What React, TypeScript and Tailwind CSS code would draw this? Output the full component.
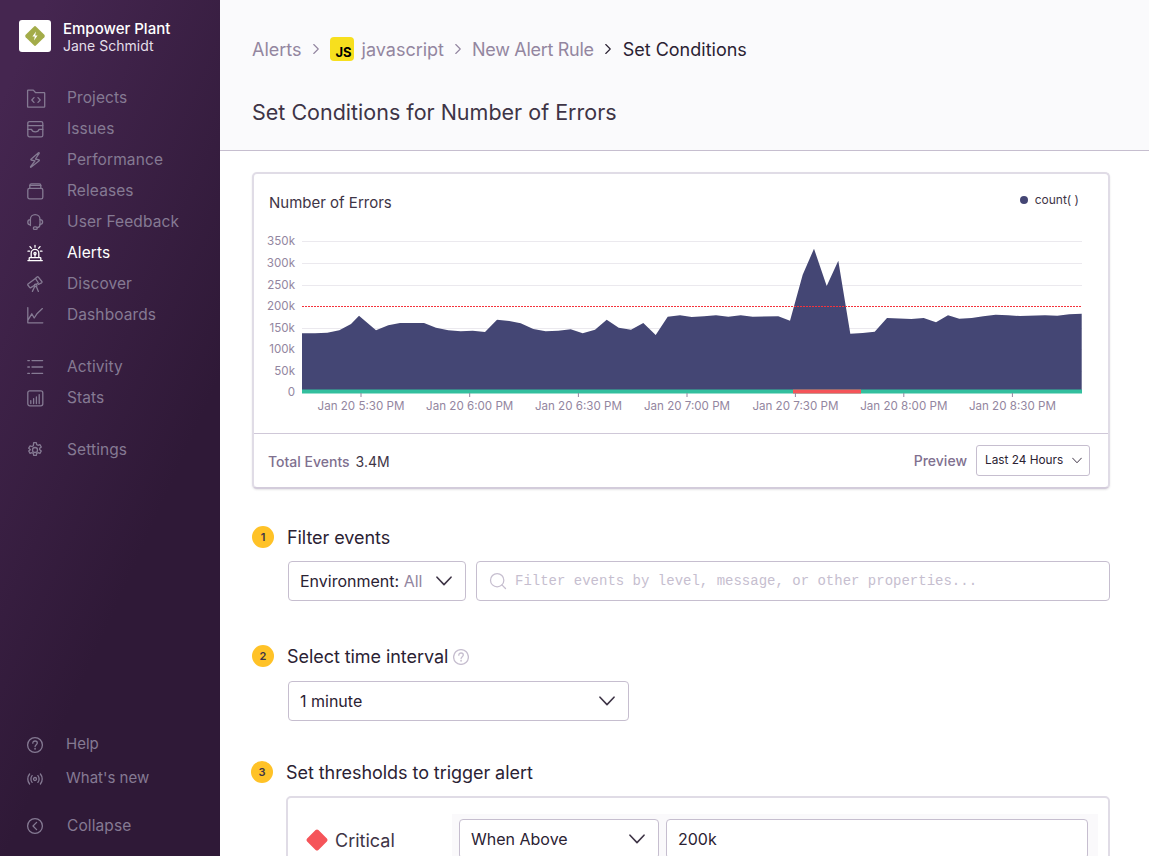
import React from "react";
import { ChevronRight, Search } from "lucide-react";

const stroke = { fill: "none", stroke: "currentColor", strokeWidth: 1.3, strokeLinecap: "round", strokeLinejoin: "round" } as const;

function Icon({ children }: { children: React.ReactNode }) {
    return (
        <svg viewBox="0 0 16 16" className="w-4 h-4 shrink-0 overflow-visible" {...stroke}>
            {children}
        </svg>
    );
}

function Chevron({ className }: { className: string }) {
    return (
        <svg viewBox="0 0 16 10" className={`shrink-0 text-[#3e3446] ${className}`} fill="none" stroke="currentColor" strokeWidth="1.6" strokeLinecap="round" strokeLinejoin="round">
            <path d="M1 1.2 8 8.6l7-7.4" />
        </svg>
    );
}

const icons: Record<string, React.ReactNode> = {
    projects: (
        <>
            <path d="M.6 16.6V.6c0-.3.2-.5.5-.5h5.2l2.4 2.6h8.4c.4 0 .6.3.6.6v13.3c0 .4-.2.6-.6.6H1.1c-.3 0-.5-.2-.5-.6z" />
            <path d="M7 7.6 4.8 10 7 12.4M11 7.6l2.2 2.4-2.2 2.4" />
        </>
    ),
    issues: (
        <>
            <rect x=".8" y=".6" width="15" height="15.2" rx="1.6" />
            <path d="M.8 4.6h15M.8 8.4h3.8c.3 1.7 1.4 2.5 3.7 2.5s3.4-.8 3.7-2.5h3.8" />
        </>
    ),
    performance: (
        <path d="M11.5.8 4 7.2c-.3.3-.2.7.2.8l3.8.8-4.4 5.8c-.3.5.2.8.6.5l8-6.4c.3-.3.2-.7-.2-.8L8.4 7l3.8-5.7c.2-.4-.3-.8-.7-.5z" />
    ),
    releases: (
        <>
            <rect x=".8" y="5.4" width="15" height="10.4" rx="1.6" />
            <path d="M2.8 5.4V2.4h11v3" />
            <path d="M2.8 2.6C2.8 1.4 3.4.8 4.4.8h8c1 0 1.4.6 1.4 1.8" />
        </>
    ),
    feedback: (
        <>
            <path d="M3.4 10.8C1.8 10.8.8 9.6.8 8.2s1-2.6 2.6-2.6M3.4 11.6V5.4C3.4 2.6 5.4.6 8.2.6s4.8 2 4.8 4.8v5.2" />
            <path d="M13 5.6c1.6 0 2.6 1 2.6 2.4s-1 2.4-2.6 2.4" />
            <path d="M13 10.6c0 2.4-1.4 3-3 3" />
            <rect x="6.4" y="12.8" width="3.8" height="2.6" rx="1.2" />
        </>
    ),
    alerts: (
        <>
            <path d="M4.2 12.4V8.2a3.8 3.8 0 0 1 7.6 0v4.2" />
            <path d="M.9 15.6h14.4M2.2 15.6v-2.4c0-.4.2-.6.6-.6h10.4c.4 0 .6.2.6.6v2.4" />
            <circle cx="8" cy="8.6" r="1.1" />
            <path d="M8 9.7v1.6M8 .5v1.7M3 1.6l1.3 1.6M13 1.6l-1.3 1.6M1 6.2h1.6M13.4 6.2H15" />
        </>
    ),
    discover: (
        <>
            <path d="m1 8 7.4-5.6 3 4.6-7.6 4.6c-.5.3-.9.2-1.2-.2L.8 9c-.2-.4-.1-.7.2-1z" />
            <path d="M8.4 2.4 10 1c.5-.4 1-.3 1.4.1l3.4 4.4c.4.5.3 1-.2 1.3l-3.2 1.6" />
            <circle cx="8.6" cy="9.4" r="1.3" />
            <path d="M7.6 10.8 5.4 15.4M9.4 10.8l2 4.6" />
        </>
    ),
    dashboards: <path d="M.8.6v15.2h15M.8 13.4l4-6.6 2.4 4.2 3-4.6 5.2-4.8" />,
    activity: (
        <>
            <path d="M5 1.6h10.6M5 8h10.6M5 14.4h10.6" />
            <path d="M.8 1.6h1.6M.8 8h1.6M.8 14.4h1.6" />
        </>
    ),
    stats: (
        <>
            <rect x=".8" y=".8" width="15" height="15" rx="2" />
            <path d="M3.8 13.6v-3M6.6 13.6V8.6M9.4 13.6V7M12.2 13.6V4.6" />
        </>
    ),
    settings: (
        <>
            <circle cx="8" cy="8" r="2.5" />
            <path d="M6.7.6h2.6l.4 2 1.3.7 1.9-.7 1.4 2.4-1.6 1.3v1.4l1.6 1.3-1.4 2.4-1.9-.7-1.3.7-.4 2H6.7l-.4-2-1.3-.7-1.9.7-1.4-2.4 1.6-1.3V7.5L1.7 6.2l1.4-2.4 1.9.7 1.3-.7z" />
        </>
    ),
    help: (
        <>
            <circle cx="8" cy="8" r="7.4" />
            <path d="M5.8 6.2c0-1.4 1-2.2 2.3-2.2s2.2.9 2.2 2c0 1.6-2.2 1.8-2.2 3.6" />
            <circle cx="8.1" cy="11.8" r=".3" />
        </>
    ),
    whatsNew: (
        <>
            <circle cx="8" cy="8" r="1.5" />
            <path d="M5.1 4.6c-1.6 1.8-1.6 5 0 6.8M10.9 4.6c1.6 1.8 1.6 5 0 6.8M2.6 3c-2.4 2.8-2.4 7.2 0 10M13.4 3c2.4 2.8 2.4 7.2 0 10" />
        </>
    ),
    collapse: (
        <>
            <circle cx="8" cy="8" r="7.4" />
            <path d="M9.6 4.4 6 8l3.6 3.6" />
        </>
    ),
};

function NavItem({ icon, label, active, bottom }: { icon: string; label: string; active?: boolean; bottom?: boolean }) {
    return (
        <div className={`flex items-center h-[31px] pl-[27px] ${bottom ? "gap-[23px] text-[15px]" : "gap-6 text-[15.5px] tracking-[0.1px]"} ${active ? "text-white" : "text-[#857a93]"}`}>
            <Icon>{icons[icon]}</Icon>
            <span>{label}</span>
        </div>
    );
}

function Sidebar() {
    return (
        <aside className="w-[220px] shrink-0 flex flex-col bg-[linear-gradient(294.17deg,#2f1937_35.57%,#452650_92.42%)]">
            <div className="flex items-start gap-3 pl-[19px] pt-5">
                <div className="w-8 h-8 rounded-[3px] bg-white flex items-center justify-center">
                    <svg viewBox="0 0 24 24" className="w-6 h-6">
                        <rect x="4.6" y="4.6" width="14.8" height="14.8" rx="1.6" transform="rotate(45 12 12)" fill="#a3ac49" />
                        <path d="m13 7.6-3.6 5h2.4L11 16.4l3.6-5h-2.4z" fill="#fff" />
                    </svg>
                </div>
                <div className="h-8 leading-[17px]">
                    <div className="text-[15px] font-medium text-white">Empower Plant</div>
                    <div className="text-[14px] text-[#e4dfe9]">Jane Schmidt</div>
                </div>
            </div>
            <nav className="mt-[30px]">
                <NavItem icon="projects" label="Projects" />
                <NavItem icon="issues" label="Issues" />
                <NavItem icon="performance" label="Performance" />
                <NavItem icon="releases" label="Releases" />
                <NavItem icon="feedback" label="User Feedback" />
                <NavItem icon="alerts" label="Alerts" active />
                <NavItem icon="discover" label="Discover" />
                <NavItem icon="dashboards" label="Dashboards" />
            </nav>
            <nav className="mt-[21px]">
                <NavItem icon="activity" label="Activity" />
                <NavItem icon="stats" label="Stats" />
            </nav>
            <nav className="mt-[21px]">
                <NavItem icon="settings" label="Settings" />
            </nav>
            <div className="mt-auto pb-[15px]">
                <div className="mb-[3px] flex flex-col gap-[3px]">
                    <NavItem icon="help" label="Help" bottom />
                    <NavItem icon="whatsNew" label="What's new" bottom />
                </div>
                <div className="mt-[16px]">
                    <NavItem icon="collapse" label="Collapse" />
                </div>
            </div>
        </aside>
    );
}

const line1 = "302,333.3 315,333.3 327.3,332.7 339.3,330.3 351,324 359,315.7 376,330.3 388.3,325.3 400,323 424,323 436,327.7 448.3,330.3 460.7,331.3 472.7,330.7 485,332 497,319.7 509.3,321 520.7,323.3 533.3,329 545.7,331.3 558.3,330.7 570.7,329.3 582.7,333.3 595,329.7 606.7,319.7 618.7,327.7 631,329.7 643.3,323 655.7,335 667.7,316.7 680,315.3";
const line2 = "691.7,317 704,316.3 716,315.3 728.3,316.7 740.7,315.3 752.7,316.7 778.3,316.3 790,320.7 802.7,274.7 814,248.7 826.7,286 838.3,260.7 850.3,333.7 862.7,333 874.7,331.7 887,318 911.3,319 923.7,318 936,322.3 948,315.3 959.3,318.7 971.7,318 983.3,316.3 995.7,314.7 1008,315.3 1020,316 1045,315.3 1057.3,315.7 1069.3,314.3 1081.7,313.7";
const areaPoints = `302,393 ${line1} ${line2} 1081.7,393`;

const yTicks: [string, number][] = [
    ["350k", 241.5],
    ["300k", 263.5],
    ["250k", 285.5],
    ["200k", 306.5],
    ["150k", 328.5],
    ["100k", 349.5],
    ["50k", 371.5],
    ["0", 392.5],
];
const xTicks: [number, string][] = [
    [361, "5:30"],
    [469.7, "6:00"],
    [578.4, "6:30"],
    [687, "7:00"],
    [795.4, "7:30"],
    [903.8, "8:00"],
    [1012.4, "8:30"],
];

function Chart() {
    return (
        <svg viewBox="254 230 854 203" className="w-[854px] h-[203px] block">
            {yTicks.slice(0, 7).map(([label, y]) =>
                label === "200k" ? null : <line key={label} x1="302" x2="1082" y1={y} y2={y} stroke="#ebe9ee" />
            )}
            {yTicks.map(([label, y]) => (
                <text key={label} x="295" y={y + 3.5} textAnchor="end" fontSize="11.6" fill="#9386a0">
                    {label}
                </text>
            ))}
            <polygon points={areaPoints} fill="#444674" />
            <line x1="302" x2="1082" y1="306.5" y2="306.5" stroke="#f5323c" strokeDasharray="2 1" />
            <rect x="302" y="389.5" width="780" height="4" fill="#33bf9e" />
            <rect x="793" y="389.5" width="68" height="4" fill="#f55459" />
            {xTicks.map(([x, time]) => (
                <g key={x}>
                    <line x1={x} x2={x} y1="393" y2="397" stroke="#9386a0" />
                    <text x={x} y="410" textAnchor="middle" fontSize="11.6" fill="#9386a0">
                        Jan 20 {time} PM
                    </text>
                </g>
            ))}
        </svg>
    );
}

function Step({ n, title, className, children }: { n: number; title: string; className?: string; children?: React.ReactNode }) {
    return (
        <div className={`flex items-center gap-[13px] ${className ?? ""}`}>
            <div className="w-[22px] h-[22px] -mt-[2px] rounded-full bg-[#ffc227] flex items-center justify-center text-[11px] font-semibold text-[#3e3446]">
                {n}
            </div>
            <div className="text-[18px] leading-[22px] tracking-[-0.06px] text-[#2b2233]">{title}</div>
            {children}
        </div>
    );
}

function Select({ children, className }: { children: React.ReactNode; className?: string }) {
    return (
        <div className={`h-10 flex items-center justify-between pl-[11px] pr-[13px] bg-white border border-[#c6becf] rounded-[4px] text-[16px] text-[#2b2233] ${className ?? ""}`}>
            <span>{children}</span>
            <Chevron className="w-4 h-[10px]" />
        </div>
    );
}

export default function App() {
    return (
        <div className="flex h-[856px] w-[1149px] overflow-hidden bg-white font-['Inter',sans-serif]">
            <Sidebar />
            <main className="flex-1 min-w-0">
                <header className="h-[151px] bg-[#fafafc] border-b border-[#c6becf] pl-8 pt-[36px]">
                    <div className="flex items-center h-[26px] text-[18px] text-[#9386a0]">
                        <span>Alerts</span>
                        <ChevronRight className="w-[18px] h-[18px] mx-[5px]" strokeWidth={1.5} />
                        <div className="relative w-6 h-6 rounded-[4px] bg-[#f7df1e] mr-2 overflow-hidden">
                            <span className="absolute right-[2px] bottom-[-1px] text-[13px] font-bold text-black">JS</span>
                        </div>
                        <span>javascript</span>
                        <ChevronRight className="w-[18px] h-[18px] mx-[5px]" strokeWidth={1.5} />
                        <span className="tracking-[-0.3px]">New Alert Rule</span>
                        <ChevronRight className="w-[18px] h-[18px] ml-[5px] mr-[6px] text-[#2b2233]" strokeWidth={1.5} />
                        <span className="text-[#2b2233]">Set Conditions</span>
                    </div>
                    <h1 className="mt-[36px] text-[21.5px] leading-7 font-normal text-[#3e3446]">Set Conditions for Number of Errors</h1>
                </header>
                <div className="pl-8 pr-[39px]">
                    <section className="mt-[21px] bg-white border-2 border-[#e0dce6] border-b-[#d3ccdb] rounded-[5px] shadow-[0_1px_2px_rgba(43,34,51,0.12)]">
                        <div className="h-[56px] flex justify-between pl-[15px] pr-[29px] pt-[19px]">
                            <div className="text-[15px] leading-5 text-[#3e3446]">Number of Errors</div>
                            <div className="flex items-center gap-[7px] h-3 mt-[1px] text-[12px] text-[#3e3446]">
                                <span className="w-2 h-2 rounded-full bg-[#444674]" />
                                count( )
                            </div>
                        </div>
                        <Chart />
                        <div className="h-[54px] border-t border-[#cfc8d8] flex items-center justify-between pl-[14px] pr-[18px]">
                            <div className="flex items-center gap-[6px] text-[14px] mt-[2px]">
                                <span className="font-medium text-[#80708f]">Total Events</span>
                                <span className="text-[#3e3446]">3.4M</span>
                            </div>
                            <div className="flex items-center gap-[9px]">
                                <span className="text-[14px] font-medium text-[#80708f]">Preview</span>
                                <div className="h-[31px] w-[114px] flex items-center justify-between pl-2 pr-[7px] border border-[#c6becf] rounded-[3px] text-[11.8px] text-[#2b2233]">
                                    Last 24 Hours
                                    <Chevron className="w-[10px] h-[7px]" />
                                </div>
                            </div>
                        </div>
                    </section>
                    <Step n={1} title="Filter events" className="mt-[38px]" />
                    <div className="mt-[12px] ml-9 flex gap-[10px]">
                        <Select className="w-[178px]">
                            Environment: <span className="text-[#9386a0]">All</span>
                        </Select>
                        <div className="flex-1 h-10 flex items-center gap-[7px] pl-[11px] pr-3 border border-[#c6becf] rounded-[4px]">
                            <Search className="w-5 h-5 text-[#c6becf]" strokeWidth={1.5} />
                            <span className="mt-[1px] font-['Liberation_Mono',monospace] text-[14px] text-[#c6becf]">
                                Filter events by level, message, or other properties...
                            </span>
                        </div>
                    </div>
                    <Step n={2} title="Select time interval" className="mt-[45px]">
                        <svg viewBox="0 0 16 16" className="w-4 h-4 -ml-[8px] text-[#c6becf]" {...stroke}>
                            {icons.help}
                        </svg>
                    </Step>
                    <div className="mt-[13px] ml-9">
                        <Select className="w-[341px]">1 minute</Select>
                    </div>
                    <Step n={3} title="Set thresholds to trigger alert" className="mt-[41px] -ml-px" />
                    <div className="mt-[12px] ml-[34px] h-[200px] border-2 border-[#e0dce6] rounded-[5px] pt-[16px] pl-[18px] pr-[10px] flex">
                        <div className="w-[146px] h-[52px] flex items-center gap-[7px] text-[18px] text-[#3e3446]">
                            <span className="w-[16px] h-[16px] ml-[3px] rotate-45 rounded-[2px] bg-[#f55459]" />
                            <span className="ml-[3px]">Critical</span>
                        </div>
                        <div className="flex-1 h-[100px] bg-[#faf9fb] pl-[7px] pr-[10px] pt-[5px] flex gap-[7px]">
                            <Select className="w-[200px]">When Above</Select>
                            <div className="flex-1 h-10 flex items-center px-[11px] bg-white border border-[#c6becf] rounded-[4px] text-[16px] text-[#2b2233]">200k</div>
                        </div>
                    </div>
                </div>
            </main>
        </div>
    );
}
